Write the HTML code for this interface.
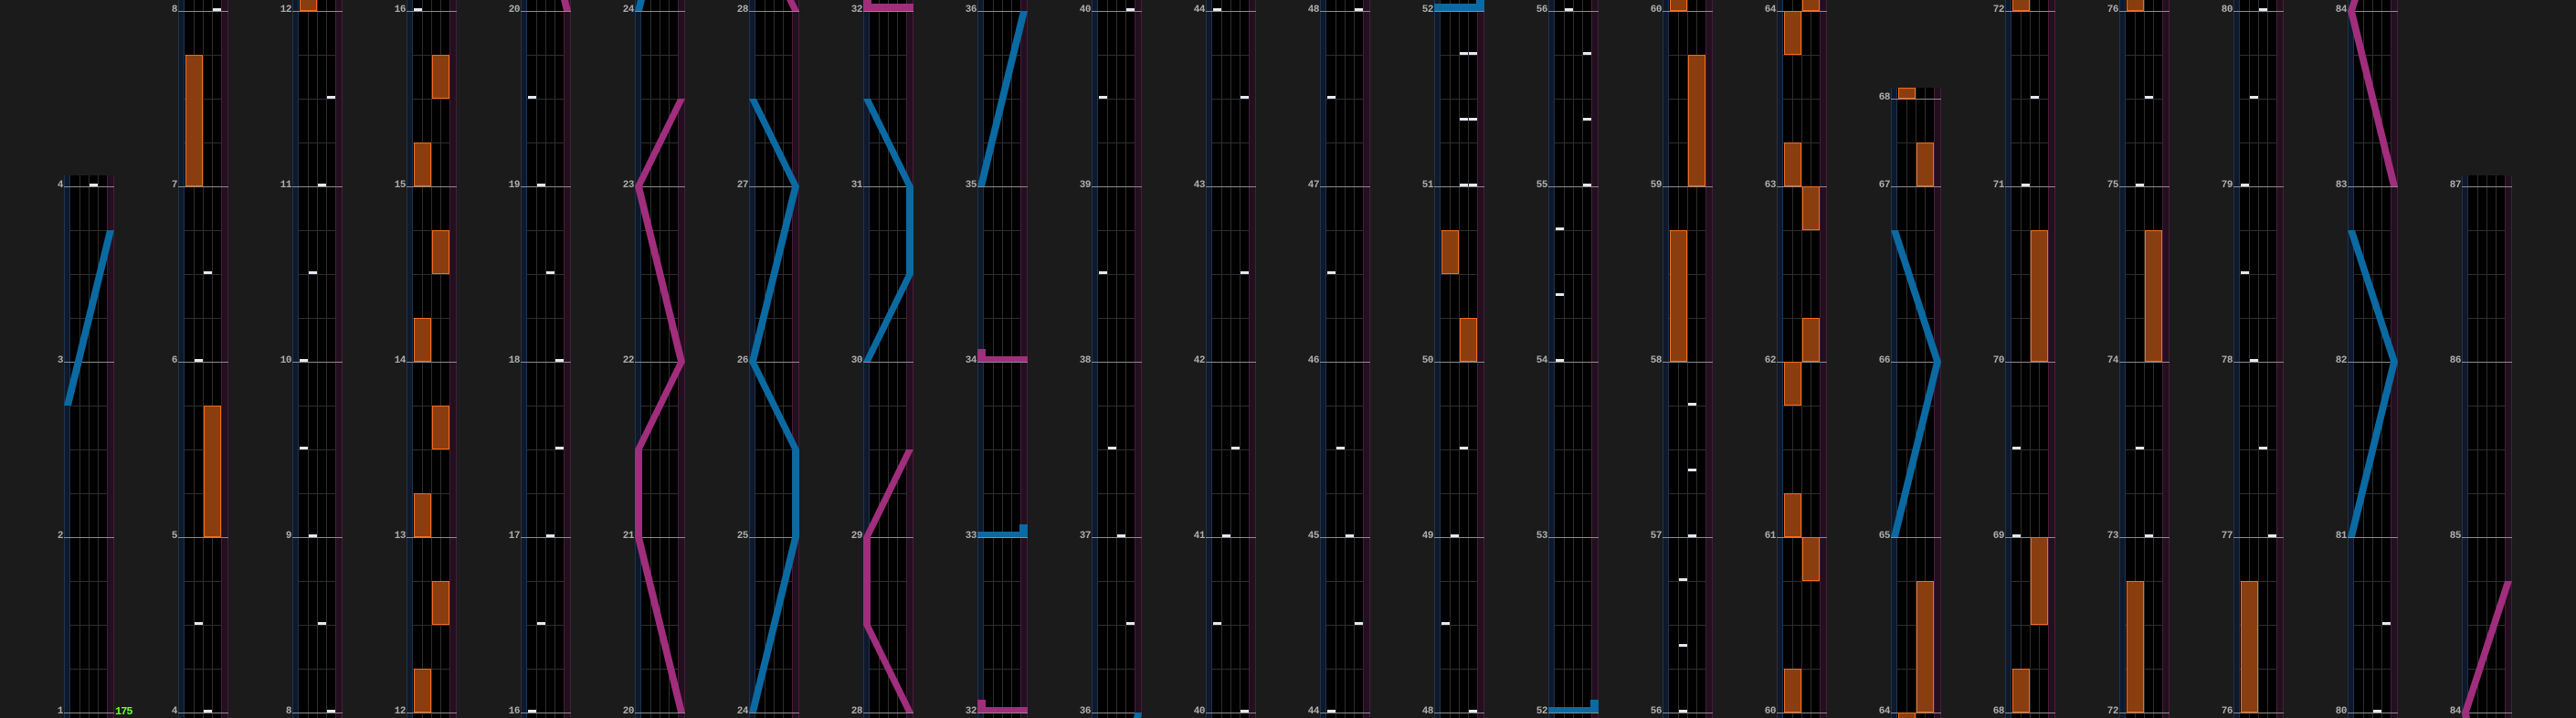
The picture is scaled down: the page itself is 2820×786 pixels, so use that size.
<!DOCTYPE html>
<html><head><meta charset="utf-8">
<style>
html,body{margin:0;padding:0;background:#1b1b1b;}
svg{display:block}
.t{font-family:"Liberation Mono","DejaVu Sans Mono",monospace;font-weight:bold;font-size:11px;fill:#adadad;text-anchor:end;letter-spacing:-0.5px}
.g{font-family:"Liberation Mono","DejaVu Sans Mono",monospace;font-weight:bold;font-size:12px;fill:#6cff2a;letter-spacing:-1px}
.c{fill:#e2e9f0}
.x{fill:#8a3e10;stroke:#f36c1c;stroke-width:1}
.b{fill:#0b6aa2}
.p{fill:#a02e7c}
</style></head><body>
<svg width="2820" height="786" viewBox="0 0 2820 786" xmlns="http://www.w3.org/2000/svg">
<defs>
<g id="f">
<rect width="55" height="786" fill="#000"/>
<rect x="0" width="7" height="786" fill="#0f192b"/>
<rect x="48" width="7" height="786" fill="#22101e"/>
<path d="M0.5 0V786M6.5 0V786" stroke="#1c3550"/>
<path d="M47.5 0V786M54.5 0V786" stroke="#4a1c3c"/>
<path d="M17.5 0V786M27.5 0V786M37.5 0V786" stroke="#2e2e2e"/>
<path d="M7 60.5H47M7 108.5H47M7 156.5H47M7 252.5H47M7 300.5H47M7 348.5H47M7 444.5H47M7 492.5H47M7 540.5H47M7 636.5H47M7 684.5H47M7 732.5H47" stroke="#2e2e2e"/>
<path d="M0 12.5H55M0 204.5H55M0 396.5H55M0 588.5H55M0 780.5H55" stroke="#8c8c8c"/>
</g>
</defs>
<rect width="2820" height="786" fill="#1b1b1b"/>

<!-- col0 -->
<svg x="70" y="0" width="55" height="786"><use href="#f"/><rect width="55" height="192" fill="#1b1b1b"/>
<polygon class="b" points="0,444 8,444 55,252 47,252"/>
<rect class="c" x="28" y="201" width="9" height="3"/>
</svg>
<text class="t" x="69" y="781">1</text><text class="t" x="69" y="589">2</text><text class="t" x="69" y="397">3</text><text class="t" x="69" y="205">4</text>
<text class="g" x="126" y="782">175</text>

<!-- col1 -->
<svg x="195" y="0" width="55" height="786"><use href="#f"/>
<rect class="x" x="28.5" y="444.5" width="18" height="143"/>
<rect class="x" x="8.5" y="60.5" width="18" height="143"/>
<rect class="c" x="28" y="777" width="9" height="3"/><rect class="c" x="18" y="681" width="9" height="3"/><rect class="c" x="18" y="393" width="9" height="3"/><rect class="c" x="28" y="297" width="9" height="3"/><rect class="c" x="38" y="9" width="9" height="3"/>
</svg>
<text class="t" x="194" y="781">4</text><text class="t" x="194" y="589">5</text><text class="t" x="194" y="397">6</text><text class="t" x="194" y="205">7</text><text class="t" x="194" y="13">8</text>

<!-- col2 -->
<svg x="320" y="0" width="55" height="786"><use href="#f"/>
<rect class="c" x="38" y="777" width="9" height="3"/><rect class="c" x="28" y="681" width="9" height="3"/><rect class="c" x="18" y="585" width="9" height="3"/><rect class="c" x="8" y="489" width="9" height="3"/><rect class="c" x="8" y="393" width="9" height="3"/><rect class="c" x="18" y="297" width="9" height="3"/><rect class="c" x="28" y="201" width="9" height="3"/><rect class="c" x="38" y="105" width="9" height="3"/>
<rect class="x" x="8.5" y="-2" width="18" height="13.5"/>
</svg>
<text class="t" x="319" y="781">8</text><text class="t" x="319" y="589">9</text><text class="t" x="319" y="397">10</text><text class="t" x="319" y="205">11</text><text class="t" x="319" y="13">12</text>

<!-- col3 -->
<svg x="445" y="0" width="55" height="786"><use href="#f"/>
<rect class="x" x="8.5" y="732.5" width="18" height="47"/><rect class="x" x="28.5" y="636.5" width="18" height="47"/><rect class="x" x="8.5" y="540.5" width="18" height="47"/><rect class="x" x="28.5" y="444.5" width="18" height="47"/><rect class="x" x="8.5" y="348.5" width="18" height="47"/><rect class="x" x="28.5" y="252.5" width="18" height="47"/><rect class="x" x="8.5" y="156.5" width="18" height="47"/><rect class="x" x="28.5" y="60.5" width="18" height="47"/>
<rect class="c" x="8" y="9" width="9" height="3"/>
</svg>
<text class="t" x="444" y="781">12</text><text class="t" x="444" y="589">13</text><text class="t" x="444" y="397">14</text><text class="t" x="444" y="205">15</text><text class="t" x="444" y="13">16</text>

<!-- col4 -->
<svg x="570" y="0" width="55" height="786"><use href="#f"/>
<rect class="c" x="8" y="777" width="9" height="3"/><rect class="c" x="18" y="681" width="9" height="3"/><rect class="c" x="28" y="585" width="9" height="3"/><rect class="c" x="38" y="489" width="9" height="3"/><rect class="c" x="38" y="393" width="9" height="3"/><rect class="c" x="28" y="297" width="9" height="3"/><rect class="c" x="18" y="201" width="9" height="3"/><rect class="c" x="8" y="105" width="9" height="3"/>
<polygon class="p" points="47,12 55,12 8,-180 0,-180"/>
</svg>
<text class="t" x="569" y="781">16</text><text class="t" x="569" y="589">17</text><text class="t" x="569" y="397">18</text><text class="t" x="569" y="205">19</text><text class="t" x="569" y="13">20</text>

<!-- col5 -->
<svg x="695" y="0" width="55" height="786"><use href="#f"/>
<polygon class="p" points="47,780 0,588 0,492 47,396 0,204 47,108 55,108 8,204 55,396 8,492 8,588 55,780"/>
<polygon class="b" points="0,12 8,12 55,-180 47,-180"/>
</svg>
<text class="t" x="694" y="781">20</text><text class="t" x="694" y="589">21</text><text class="t" x="694" y="397">22</text><text class="t" x="694" y="205">23</text><text class="t" x="694" y="13">24</text>

<!-- col6 -->
<svg x="820" y="0" width="55" height="786"><use href="#f"/>
<polygon class="b" points="0,780 47,588 47,492 0,396 47,204 0,108 8,108 55,204 8,396 55,492 55,588 8,780"/>
<polygon class="p" points="47,12 55,12 8,-84 0,-84"/>
</svg>
<text class="t" x="819" y="781">24</text><text class="t" x="819" y="589">25</text><text class="t" x="819" y="397">26</text><text class="t" x="819" y="205">27</text><text class="t" x="819" y="13">28</text>

<!-- col7 -->
<svg x="945" y="0" width="55" height="786"><use href="#f"/>
<polygon class="p" points="47,780 0,684 0,588 47,492 55,492 8,588 8,684 55,780"/>
<polygon class="b" points="0,396 47,300 47,204 0,108 8,108 55,204 55,300 8,396"/>
<rect class="p" x="0" y="4" width="55" height="8"/><rect class="p" x="0" y="-2" width="9" height="14"/>
</svg>
<text class="t" x="944" y="781">28</text><text class="t" x="944" y="589">29</text><text class="t" x="944" y="397">30</text><text class="t" x="944" y="205">31</text><text class="t" x="944" y="13">32</text>

<!-- col8 -->
<svg x="1070" y="0" width="55" height="786"><use href="#f"/>
<rect class="p" x="0" y="774" width="55" height="6"/><rect class="p" x="0" y="766" width="9" height="14"/>
<rect class="b" x="0" y="582" width="55" height="6"/><rect class="b" x="46" y="574" width="9" height="14"/>
<rect class="p" x="0" y="390" width="55" height="6"/><rect class="p" x="0" y="382" width="9" height="14"/>
<polygon class="b" points="0,204 8,204 55,12 47,12"/>
</svg>
<text class="t" x="1069" y="781">32</text><text class="t" x="1069" y="589">33</text><text class="t" x="1069" y="397">34</text><text class="t" x="1069" y="205">35</text><text class="t" x="1069" y="13">36</text>

<!-- col9 -->
<svg x="1195" y="0" width="55" height="786"><use href="#f"/>
<rect class="c" x="38" y="681" width="9" height="3"/><rect class="c" x="28" y="585" width="9" height="3"/><rect class="c" x="18" y="489" width="9" height="3"/><rect class="c" x="8" y="297" width="9" height="3"/><rect class="c" x="8" y="105" width="9" height="3"/><rect class="c" x="38" y="9" width="9" height="3"/>
<polygon class="b" points="46,786 47,780 55,780 54,786"/>
</svg>
<text class="t" x="1194" y="781">36</text><text class="t" x="1194" y="589">37</text><text class="t" x="1194" y="397">38</text><text class="t" x="1194" y="205">39</text><text class="t" x="1194" y="13">40</text>

<!-- col10 -->
<svg x="1320" y="0" width="55" height="786"><use href="#f"/>
<rect class="c" x="38" y="777" width="9" height="3"/><rect class="c" x="8" y="681" width="9" height="3"/><rect class="c" x="18" y="585" width="9" height="3"/><rect class="c" x="28" y="489" width="9" height="3"/><rect class="c" x="38" y="297" width="9" height="3"/><rect class="c" x="38" y="105" width="9" height="3"/><rect class="c" x="8" y="9" width="9" height="3"/>
</svg>
<text class="t" x="1319" y="781">40</text><text class="t" x="1319" y="589">41</text><text class="t" x="1319" y="397">42</text><text class="t" x="1319" y="205">43</text><text class="t" x="1319" y="13">44</text>

<!-- col11 -->
<svg x="1445" y="0" width="55" height="786"><use href="#f"/>
<rect class="c" x="8" y="777" width="9" height="3"/><rect class="c" x="38" y="681" width="9" height="3"/><rect class="c" x="28" y="585" width="9" height="3"/><rect class="c" x="18" y="489" width="9" height="3"/><rect class="c" x="8" y="297" width="9" height="3"/><rect class="c" x="8" y="105" width="9" height="3"/><rect class="c" x="38" y="9" width="9" height="3"/>
</svg>
<text class="t" x="1444" y="781">44</text><text class="t" x="1444" y="589">45</text><text class="t" x="1444" y="397">46</text><text class="t" x="1444" y="205">47</text><text class="t" x="1444" y="13">48</text>

<!-- col12 -->
<svg x="1570" y="0" width="55" height="786"><use href="#f"/>
<rect class="c" x="38" y="777" width="9" height="3"/><rect class="c" x="8" y="681" width="9" height="3"/><rect class="c" x="18" y="585" width="9" height="3"/><rect class="c" x="28" y="489" width="9" height="3"/>
<rect class="x" x="28.5" y="348.5" width="18" height="47"/><rect class="x" x="8.5" y="252.5" width="18" height="47"/>
<rect class="c" x="28" y="201" width="9" height="3"/><rect class="c" x="38" y="201" width="9" height="3"/><rect class="c" x="28" y="129" width="9" height="3"/><rect class="c" x="38" y="129" width="9" height="3"/><rect class="c" x="28" y="57" width="9" height="3"/><rect class="c" x="38" y="57" width="9" height="3"/>
<rect class="b" x="0" y="4" width="55" height="8"/><rect class="b" x="46" y="-2" width="9" height="14"/>
</svg>
<text class="t" x="1569" y="781">48</text><text class="t" x="1569" y="589">49</text><text class="t" x="1569" y="397">50</text><text class="t" x="1569" y="205">51</text><text class="t" x="1569" y="13">52</text>

<!-- col13 -->
<svg x="1695" y="0" width="55" height="786"><use href="#f"/>
<rect class="b" x="0" y="774" width="55" height="6"/><rect class="b" x="46" y="766" width="9" height="14"/>
<rect class="c" x="8" y="393" width="9" height="3"/><rect class="c" x="8" y="321" width="9" height="3"/><rect class="c" x="8" y="249" width="9" height="3"/><rect class="c" x="38" y="201" width="9" height="3"/><rect class="c" x="38" y="129" width="9" height="3"/><rect class="c" x="38" y="57" width="9" height="3"/><rect class="c" x="18" y="9" width="9" height="3"/>
</svg>
<text class="t" x="1694" y="781">52</text><text class="t" x="1694" y="589">53</text><text class="t" x="1694" y="397">54</text><text class="t" x="1694" y="205">55</text><text class="t" x="1694" y="13">56</text>

<!-- col14 -->
<svg x="1820" y="0" width="55" height="786"><use href="#f"/>
<rect class="c" x="18" y="777" width="9" height="3"/><rect class="c" x="18" y="705" width="9" height="3"/><rect class="c" x="18" y="633" width="9" height="3"/><rect class="c" x="28" y="585" width="9" height="3"/><rect class="c" x="28" y="513" width="9" height="3"/><rect class="c" x="28" y="441" width="9" height="3"/>
<rect class="x" x="8.5" y="252.5" width="18" height="143"/><rect class="x" x="28.5" y="60.5" width="18" height="143"/><rect class="x" x="8.5" y="-2" width="18" height="13.5"/>
</svg>
<text class="t" x="1819" y="781">56</text><text class="t" x="1819" y="589">57</text><text class="t" x="1819" y="397">58</text><text class="t" x="1819" y="205">59</text><text class="t" x="1819" y="13">60</text>

<!-- col15 -->
<svg x="1945" y="0" width="55" height="786"><use href="#f"/>
<rect class="x" x="8.5" y="732.5" width="18" height="47"/><rect class="x" x="28.5" y="588.5" width="18" height="47"/><rect class="x" x="8.5" y="540.5" width="18" height="47"/><rect class="x" x="8.5" y="396.5" width="18" height="47"/><rect class="x" x="28.5" y="348.5" width="18" height="47"/><rect class="x" x="28.5" y="204.5" width="18" height="47"/><rect class="x" x="8.5" y="156.5" width="18" height="47"/><rect class="x" x="8.5" y="12.5" width="18" height="47"/><rect class="x" x="28.5" y="-2" width="18" height="13.5"/>
</svg>
<text class="t" x="1944" y="781">60</text><text class="t" x="1944" y="589">61</text><text class="t" x="1944" y="397">62</text><text class="t" x="1944" y="205">63</text><text class="t" x="1944" y="13">64</text>

<!-- col16 -->
<svg x="2070" y="0" width="55" height="786"><use href="#f"/><rect width="55" height="96" fill="#1b1b1b"/>
<path d="M0 108.5H55" stroke="#8c8c8c"/>
<rect class="x" x="28.5" y="636.5" width="18" height="143"/>
<rect class="x" x="8.5" y="780.5" width="18" height="8"/>
<polygon class="b" points="0,588 47,396 0,252 8,252 55,396 8,588"/>
<rect class="x" x="28.5" y="156.5" width="18" height="47"/>
<rect class="x" x="8.5" y="96.5" width="18" height="11"/>
</svg>
<text class="t" x="2069" y="781">64</text><text class="t" x="2069" y="589">65</text><text class="t" x="2069" y="397">66</text><text class="t" x="2069" y="205">67</text><text class="t" x="2069" y="109">68</text>

<!-- col17 -->
<svg x="2195" y="0" width="55" height="786"><use href="#f"/>
<rect class="x" x="8.5" y="732.5" width="18" height="47"/><rect class="x" x="28.5" y="588.5" width="18" height="95"/>
<rect class="c" x="8" y="585" width="9" height="3"/><rect class="c" x="8" y="489" width="9" height="3"/>
<rect class="x" x="28.5" y="252.5" width="18" height="143"/>
<rect class="c" x="18" y="201" width="9" height="3"/><rect class="c" x="28" y="105" width="9" height="3"/>
<rect class="x" x="8.5" y="-2" width="18" height="13.5"/>
</svg>
<text class="t" x="2194" y="781">68</text><text class="t" x="2194" y="589">69</text><text class="t" x="2194" y="397">70</text><text class="t" x="2194" y="205">71</text><text class="t" x="2194" y="13">72</text>

<!-- col18 -->
<svg x="2320" y="0" width="55" height="786"><use href="#f"/>
<rect class="x" x="8.5" y="636.5" width="18" height="143"/>
<rect class="c" x="28" y="585" width="9" height="3"/><rect class="c" x="18" y="489" width="9" height="3"/>
<rect class="x" x="28.5" y="252.5" width="18" height="143"/>
<rect class="c" x="18" y="201" width="9" height="3"/><rect class="c" x="28" y="105" width="9" height="3"/>
<rect class="x" x="8.5" y="-2" width="18" height="13.5"/>
</svg>
<text class="t" x="2319" y="781">72</text><text class="t" x="2319" y="589">73</text><text class="t" x="2319" y="397">74</text><text class="t" x="2319" y="205">75</text><text class="t" x="2319" y="13">76</text>

<!-- col19 -->
<svg x="2445" y="0" width="55" height="786"><use href="#f"/>
<rect class="x" x="8.5" y="636.5" width="18" height="143"/>
<rect class="c" x="38" y="585" width="9" height="3"/><rect class="c" x="28" y="489" width="9" height="3"/><rect class="c" x="18" y="393" width="9" height="3"/><rect class="c" x="8" y="297" width="9" height="3"/><rect class="c" x="8" y="201" width="9" height="3"/><rect class="c" x="18" y="105" width="9" height="3"/><rect class="c" x="28" y="9" width="9" height="3"/>
</svg>
<text class="t" x="2444" y="781">76</text><text class="t" x="2444" y="589">77</text><text class="t" x="2444" y="397">78</text><text class="t" x="2444" y="205">79</text><text class="t" x="2444" y="13">80</text>

<!-- col20 -->
<svg x="2570" y="0" width="55" height="786"><use href="#f"/>
<rect class="c" x="28" y="777" width="9" height="3"/><rect class="c" x="38" y="681" width="9" height="3"/>
<polygon class="b" points="0,588 47,396 0,252 8,252 55,396 8,588"/>
<polygon class="p" points="47,204 0,12 8,-12 16,-12 8,12 55,204"/>
</svg>
<text class="t" x="2569" y="781">80</text><text class="t" x="2569" y="589">81</text><text class="t" x="2569" y="397">82</text><text class="t" x="2569" y="205">83</text><text class="t" x="2569" y="13">84</text>

<!-- col21 -->
<svg x="2695" y="0" width="55" height="786"><use href="#f"/><rect width="55" height="192" fill="#1b1b1b"/>
<polygon class="p" points="1,786 0,780 47,636 55,636 8,780 9,786"/>
</svg>
<text class="t" x="2694" y="781">84</text><text class="t" x="2694" y="589">85</text><text class="t" x="2694" y="397">86</text><text class="t" x="2694" y="205">87</text>
</svg>
</body></html>
